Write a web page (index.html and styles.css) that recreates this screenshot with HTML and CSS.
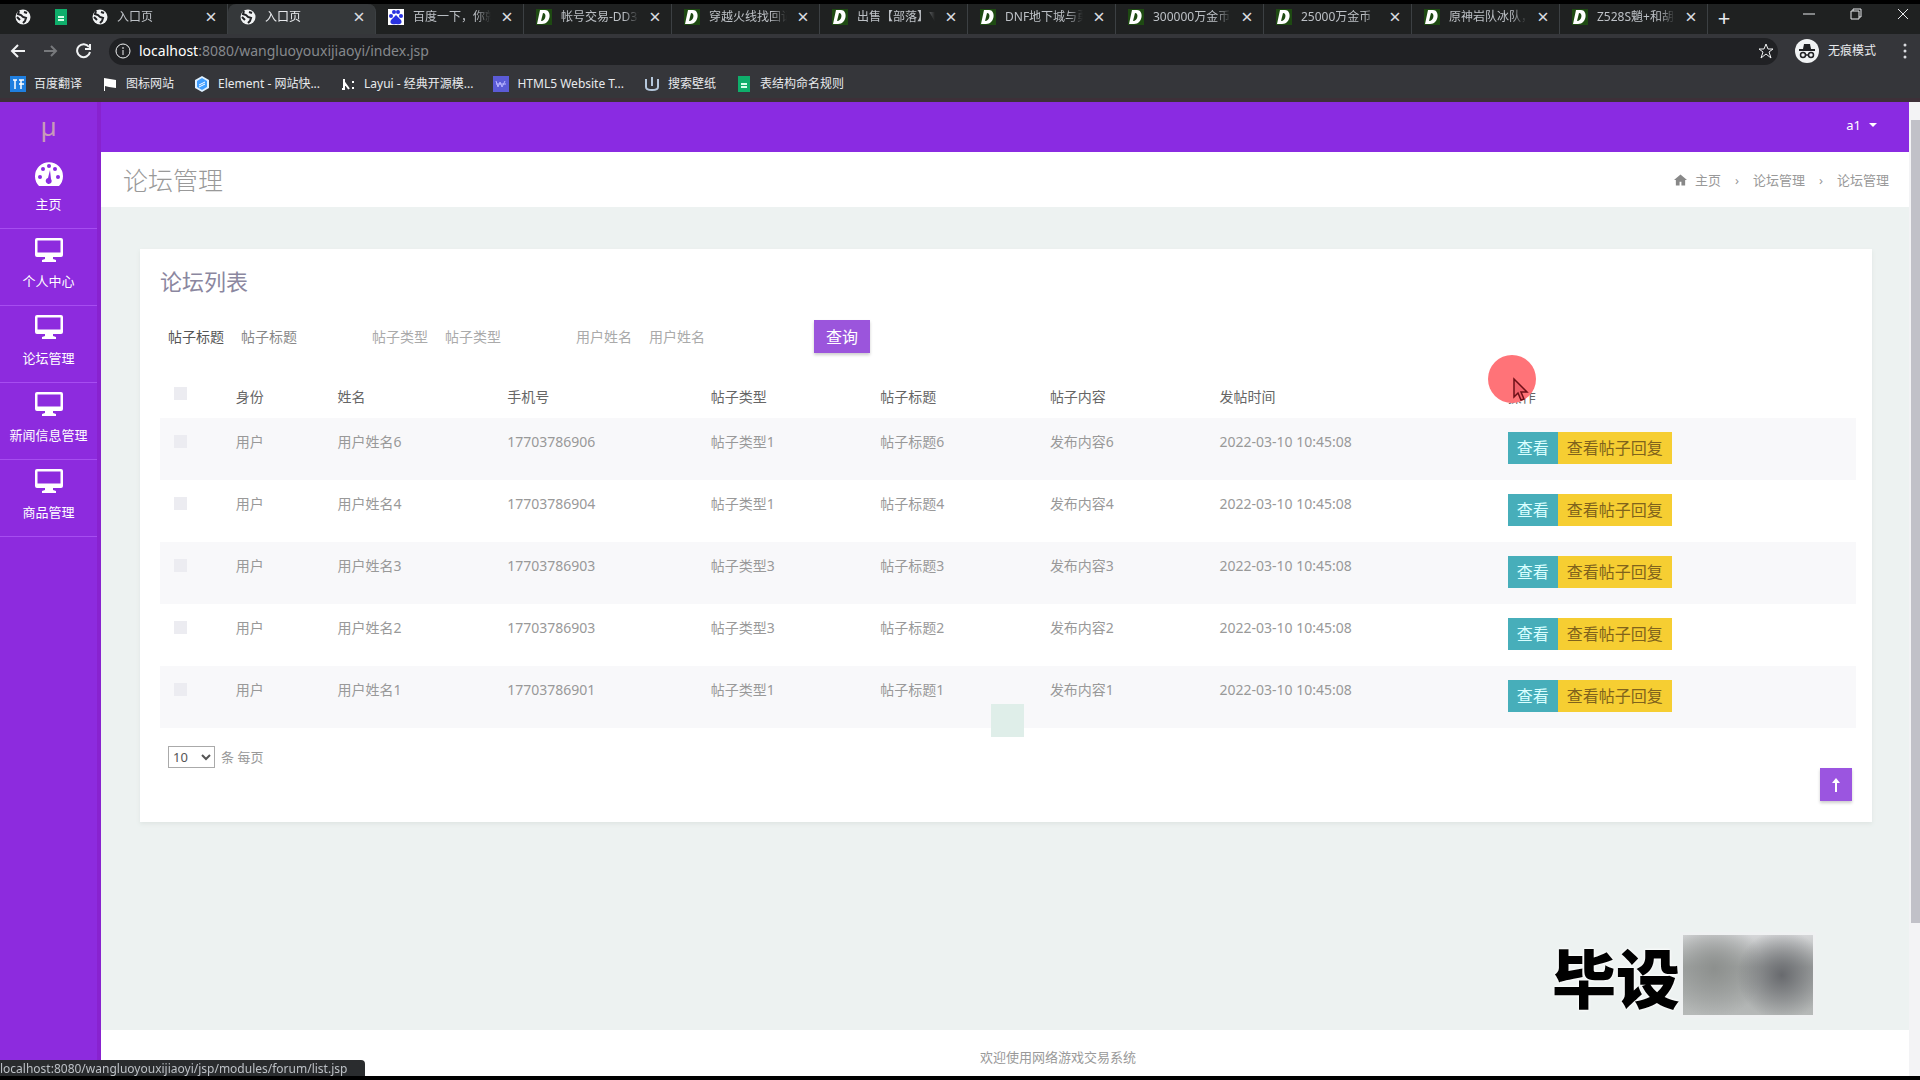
FILE: index.html
```html
<!DOCTYPE html>
<html lang="zh">
<head>
<meta charset="utf-8">
<title>入口页</title>
<link rel="stylesheet" href="styles.css">
</head>
<body>
<svg class="defs" aria-hidden="true">
  <symbol id="globe" viewBox="0 0 16 16"><circle cx="8" cy="8" r="7.500" fill="#f1f3f4"/><path d="M4 2l-1 3 3 1 2 2 3 1-1 3-2 2M9 3l3 1M2 8l3 3" fill="none" stroke="#202124" stroke-width="2"/></symbol>
  <symbol id="dd" viewBox="0 0 16 16"><path d="M0 0h16v16H0z" fill="#1e4a12"/><path fill-rule="evenodd" d="M4 1h5c7 0 6 14-3 14H1zM7 4L5 12c5 0 6-8 2-8z" fill="#fff"/></symbol>
  <symbol id="sheet" viewBox="0 0 16 16"><path d="M2 0h12v16H2z" fill="#0fae6b"/><path d="M5 8h6M5 11h6" stroke="#d7ffe9" stroke-width="2"/></symbol>
  <symbol id="monitor" viewBox="0 0 28 28"><path fill-rule="evenodd" d="M2 2h24a2 2 0 0 1 2 2v15a2 2 0 0 1-2 2h-8v2l3 1v2H7v-2l3-1v-2H2a2 2 0 0 1-2-2V4a2 2 0 0 1 2-2zM2.500 4.500v12h23v-12z" fill="#fff"/></symbol>
</svg>

<div class="browser">
  <div class="tabs">
    <div class="pins"><svg><use href="#globe"/></svg><svg><use href="#sheet"/></svg></div>
    <div class="tab"><svg><use href="#globe"/></svg><span>入口页</span><button aria-label="关闭">×</button></div>
    <div class="tab active"><svg><use href="#globe"/></svg><span>入口页</span><button aria-label="关闭">×</button></div>
    <div class="tab"><svg viewBox="0 0 16 16"><path d="M0 0h16v16H0z" fill="#fff"/><g fill="#2932e1"><circle cx="3" cy="7" r="2"/><circle cx="6" cy="3" r="2"/><circle cx="10" cy="3" r="2"/><circle cx="13" cy="7" r="2"/><path d="M8 6l5 5c2 4-2 5-5 4-3 1-7 0-5-4z"/></g></svg><span>百度一下，你就知道</span><button aria-label="关闭">×</button></div>
    <div class="tab"><svg><use href="#dd"/></svg><span>帐号交易-DD373</span><button aria-label="关闭">×</button></div>
    <div class="tab"><svg><use href="#dd"/></svg><span>穿越火线找回记录</span><button aria-label="关闭">×</button></div>
    <div class="tab"><svg><use href="#dd"/></svg><span>出售【部落】▼</span><button aria-label="关闭">×</button></div>
    <div class="tab"><svg><use href="#dd"/></svg><span>DNF地下城与勇士</span><button aria-label="关闭">×</button></div>
    <div class="tab"><svg><use href="#dd"/></svg><span>300000万金币</span><button aria-label="关闭">×</button></div>
    <div class="tab"><svg><use href="#dd"/></svg><span>25000万金币</span><button aria-label="关闭">×</button></div>
    <div class="tab"><svg><use href="#dd"/></svg><span>原神岩队冰队，</span><button aria-label="关闭">×</button></div>
    <div class="tab"><svg><use href="#dd"/></svg><span>Z528S魈+和胡桃</span><button aria-label="关闭">×</button></div>
    <button class="newtab" aria-label="新标签页">+</button>
    <div class="winctl">
      <svg viewBox="0 0 12 12"><path d="M0 6h12"/></svg>
      <svg viewBox="0 0 12 12"><path d="M1 3h8v8H1zM3 3V1h8v8H9"/></svg>
      <svg viewBox="0 0 12 12"><path d="M1 1l10 10M11 1L1 11"/></svg>
    </div>
  </div>
  <div class="toolbar">
    <svg viewBox="0 0 16 16"><path d="M15 8H2M8 2L2 8l6 6"/></svg>
    <svg class="dim" viewBox="0 0 16 16"><path d="M1 8h12M8 3l5 5-5 5"/></svg>
    <svg viewBox="0 0 16 16"><path d="M13 4a6.500 6.500 0 1 0 1 5M14 1v5H9"/></svg>
    <div class="omni">
      <svg class="thin" viewBox="0 0 16 16"><circle cx="8" cy="8" r="7"/><path d="M8 7v5M8 4v2"/></svg>
      <span class="url"><b>localhost</b>:8080/wangluoyouxijiaoyi/index.jsp</span>
      <svg class="thin" viewBox="0 0 16 16"><path d="M8 1l2 5h5l-4 3 2 6-5-4-5 4 2-6-4-3h5z"/></svg>
    </div>
    <svg class="incog" viewBox="0 0 24 24"><circle cx="12" cy="12" r="12" fill="#f1f3f4" stroke="none"/><path d="M8 10l1-5h6l1 5z" fill="#202124" stroke="none"/><path d="M4 11h16" stroke="#202124"/><g stroke="#202124" stroke-width="1.500"><circle cx="8" cy="16" r="2.500"/><circle cx="16" cy="16" r="2.500"/><path d="M10 16h4"/></g></svg>
    <span class="mode">无痕模式</span>
    <svg class="kebab" viewBox="0 0 4 16"><g fill="#dadce0" stroke="none"><circle cx="2" cy="2" r="1.500"/><circle cx="2" cy="8" r="1.500"/><circle cx="2" cy="14" r="1.500"/></g></svg>
  </div>
  <nav class="marks">
    <a href="#"><svg viewBox="0 0 16 16"><path d="M0 0h16v16H0z" fill="#1f7fe0"/><path d="M3 4h4M5 4v9M9 4h5M11 4v9M9 8h5" stroke="#fff" stroke-width="1.500"/></svg>百度翻译</a>
    <a href="#"><svg viewBox="0 0 16 16"><path d="M2 2l6 1 6 1v8l-7-1-4-1v5H2z" fill="#fff"/></svg>图标网站</a>
    <a href="#"><svg viewBox="0 0 16 16"><path d="M8 0l7 4v8l-7 4-7-4V4z" fill="#dff0ff"/><path d="M8 2l5 3v6l-5 3-5-3V5z" fill="#409eff"/><path d="M5 9l6-3M5 11l6-3" stroke="#fff"/></svg>Element - 网站快...</a>
    <a href="#"><svg viewBox="0 0 16 16"><path d="M4 3v9M4 6l5 7M2 13h3M13 5v2M13 11v2" stroke="#fff" stroke-width="2"/></svg>Layui - 经典开源模...</a>
    <a href="#"><svg viewBox="0 0 16 16"><path d="M0 0h16v16H0z" fill="#5b5bd6"/><path d="M3 5l2 6 2-5 2 5 3-6M3 8h10" fill="none" stroke="#b9b6ff"/></svg>HTML5 Website T...</a>
    <a href="#"><svg viewBox="0 0 16 16"><path d="M2 3v8c0 4 12 4 12 0V3M8 1v9" fill="none" stroke="#b5c8dc" stroke-width="2"/></svg>搜索壁纸</a>
    <a href="#"><svg><use href="#sheet"/></svg>表结构命名规则</a>
  </nav>
</div>

<div class="app">
  <aside class="side">
    <div class="logo">µ</div>
    <a href="#"><svg viewBox="0 0 28 28"><path d="M4 27a14 14 0 1 1 20 0z" fill="#fff"/><g fill="#8a2be2"><circle cx="5" cy="18" r="2"/><circle cx="8" cy="10" r="2"/><circle cx="14" cy="7" r="2"/><circle cx="20" cy="10" r="2"/><circle cx="23" cy="18" r="2"/><path d="M15 11l1 9a3 3 0 1 1-3-1z"/></g></svg>主页</a>
    <a href="#"><svg><use href="#monitor"/></svg>个人中心</a>
    <a href="#"><svg><use href="#monitor"/></svg>论坛管理</a>
    <a href="#"><svg><use href="#monitor"/></svg>新闻信息管理</a>
    <a href="#"><svg><use href="#monitor"/></svg>商品管理</a>
  </aside>
  <div class="main">
    <header class="top"><button>a1 <i></i></button></header>
    <div class="titlebar">
      <h1>论坛管理</h1>
      <nav class="crumbs">
        <svg viewBox="0 0 14 12"><path d="M7 0l7 6h-2v6H8V8H6v4H2V6H0z" fill="#888"/></svg>
        <a href="#">主页</a><span>›</span><a href="#">论坛管理</a><span>›</span><a href="#">论坛管理</a>
      </nav>
    </div>
    <main class="content">
      <section class="card">
        <h2>论坛列表</h2>
        <form class="search">
          <label for="t">帖子标题</label><input id="t" placeholder="帖子标题">
          <label class="soft" for="k">帖子类型</label><input id="k" class="soft" placeholder="帖子类型">
          <label class="soft" for="n">用户姓名</label><input id="n" class="soft" placeholder="用户姓名">
          <button type="button">查询</button>
        </form>
        <table>
          <colgroup><col class="w4"><col class="w6"><col class="w10"><col class="w12"><col class="w10"><col class="w10"><col class="w10"><col class="w17"><col class="w21"></colgroup>
          <thead><tr><th><input type="checkbox" aria-label="全选"></th><th>身份</th><th>姓名</th><th>手机号</th><th>帖子类型</th><th>帖子标题</th><th>帖子内容</th><th>发帖时间</th><th>操作</th></tr></thead>
          <tbody>
            <tr><td><input type="checkbox" aria-label="选择"></td><td>用户</td><td>用户姓名6</td><td>17703786906</td><td>帖子类型1</td><td>帖子标题6</td><td>发布内容6</td><td>2022-03-10 10:45:08</td><td><div class="ops"><button class="view">查看</button><button class="reply">查看帖子回复</button></div></td></tr>
            <tr><td><input type="checkbox" aria-label="选择"></td><td>用户</td><td>用户姓名4</td><td>17703786904</td><td>帖子类型1</td><td>帖子标题4</td><td>发布内容4</td><td>2022-03-10 10:45:08</td><td><div class="ops"><button class="view">查看</button><button class="reply">查看帖子回复</button></div></td></tr>
            <tr><td><input type="checkbox" aria-label="选择"></td><td>用户</td><td>用户姓名3</td><td>17703786903</td><td>帖子类型3</td><td>帖子标题3</td><td>发布内容3</td><td>2022-03-10 10:45:08</td><td><div class="ops"><button class="view">查看</button><button class="reply">查看帖子回复</button></div></td></tr>
            <tr><td><input type="checkbox" aria-label="选择"></td><td>用户</td><td>用户姓名2</td><td>17703786903</td><td>帖子类型3</td><td>帖子标题2</td><td>发布内容2</td><td>2022-03-10 10:45:08</td><td><div class="ops"><button class="view">查看</button><button class="reply">查看帖子回复</button></div></td></tr>
            <tr><td><input type="checkbox" aria-label="选择"></td><td>用户</td><td>用户姓名1</td><td>17703786901</td><td>帖子类型1</td><td>帖子标题1</td><td>发布内容1</td><td>2022-03-10 10:45:08</td><td><div class="ops"><button class="view">查看</button><button class="reply">查看帖子回复</button></div></td></tr>
          </tbody>
        </table>
        <div class="pager"><select id="size" aria-label="条数"><option>10</option></select><label for="size">条 每页</label></div>
      </section>
    </main>
    <footer>欢迎使用网络游戏交易系统</footer>
  </div>
  <div class="scroll"><i></i></div>
</div>

<button class="totop" aria-label="返回顶部"><svg viewBox="0 0 8 14"><path d="M0 5l4-5 4 5H5v9H3V5z" fill="#fff"/></svg></button>
<div class="spot"></div>
<div class="pointer"><svg viewBox="0 0 50 54"><circle cx="24" cy="24" r="24" fill="#ff7378"/><path d="M26 24v18l4-4 3 7 3-1-3-7h6z" fill="#f0606a" stroke="#6d1018" stroke-width="1.500"/></svg></div>
<div class="mark">毕设<i></i></div>
<div class="status">localhost:8080/wangluoyouxijiaoyi/jsp/modules/forum/list.jsp</div>
</body>
</html>
```
FILE: styles.css
```css
* { box-sizing: border-box; }
body { margin: 0; height: 100vh; display: flex; flex-direction: column; overflow: hidden; background: #000; border-bottom: 4px solid #000; font: 14px/20px "Noto Sans", "Noto Sans CJK SC", sans-serif; color: #777; }
button, input, select { font: inherit; }
button { border: 0; padding: 0; background: none; color: inherit; }
a { color: inherit; text-decoration: none; }
svg { flex: none; display: block; }
.defs { position: absolute; width: 0; height: 0; }

.browser { flex: none; background: #35363a; border-top: 4px solid #000; border-bottom: 4px solid #3d3038; color: #e8eaed; font-size: 13px; }
.tabs { height: 30px; display: flex; align-items: center; background: #1f2121; font-size: 12px; }
.pins { flex: none; width: 80px; padding: 0 0 4px 15px; display: flex; gap: 22px; }
.pins svg, .tab svg { width: 16px; height: 16px; }
.tab { flex: 0 1 148px; min-width: 0; height: 30px; padding: 0 9px 4px 12px; display: flex; align-items: center; gap: 9px; border-right: 1px solid #3c4043; color: #bdc1c6; }
.tab span { flex: 1; min-width: 0; overflow: hidden; white-space: nowrap; mask-image: linear-gradient(to right, #000 80%, transparent); }
.tab button { width: 14px; font-size: 20px; color: #dadce0; }
.tab.active { background: #35383a; color: #e8eaed; border-radius: 8px 8px 0 0; }
.newtab { width: 32px; font-size: 22px; padding-bottom: 4px; }
.winctl { margin-left: auto; padding: 0 11px 10px 0; display: flex; gap: 35px; }
.winctl svg { width: 12px; height: 12px; fill: none; stroke: #e8eaed; }
.toolbar { height: 34px; padding: 0 13px 0 10px; display: flex; align-items: center; gap: 17px; }
.toolbar svg { width: 16px; height: 16px; fill: none; stroke: #f1f3f4; stroke-width: 2; }
.toolbar .dim { stroke: #77797c; }
.toolbar .thin { stroke-width: 1; }
.toolbar .incog { width: 24px; height: 24px; }
.toolbar .kebab { width: 4px; margin-left: 10px; }
.omni { flex: 1; height: 27px; padding: 0 4px 0 6px; border-radius: 14px; background: #202124; display: flex; align-items: center; gap: 8px; font-size: 14px; }
.url { flex: 1; color: #85888c; }
.url b { font-weight: 400; color: #fff; }
.mode { margin-left: -8px; font-size: 12px; }
.marks { height: 30px; padding: 2px 0 0 10px; display: flex; align-items: center; gap: 20px; font-size: 12px; white-space: nowrap; }
.marks a { display: flex; align-items: center; gap: 8px; }
.marks svg { width: 16px; height: 16px; }

.app { flex: 1; min-height: 0; display: flex; background: #8a2be2; }
.side { width: 101px; border-right: 4px solid #8822cf; background: #8d2bde; color: #fff; font-size: 13px; }
.logo { height: 50px; padding: 12px 0 0; text-align: center; font: 400 26px/24px "Noto Sans", sans-serif; color: #c89ab8; }
.side a { height: 77px; padding: 7px 0 0; display: flex; flex-direction: column; align-items: center; gap: 7px; border-bottom: 1px solid #a64df0; white-space: nowrap; }
.side a svg { width: 28px; height: 28px; }
.main { flex: 1; min-width: 0; display: flex; flex-direction: column; background: #edf2f1; }
.top { height: 50px; padding: 0 32px 4px 0; display: flex; justify-content: flex-end; align-items: center; background: #8a2be2; color: #fff; font-size: 13px; }
.top button { display: flex; align-items: center; gap: 8px; }
.top i { border: 4px solid transparent; border-top-color: #fff; border-bottom: 0; }
.titlebar { height: 55px; padding: 0 20px 0 22px; display: flex; align-items: center; justify-content: space-between; background: #fff; }
h1 { margin: 0; font-size: 25px; line-height: 32px; font-weight: 300; color: #999; }
.crumbs { display: flex; align-items: center; gap: 14px; font-size: 13px; color: #999; }
.crumbs svg { width: 13px; height: 12px; margin-right: -6px; }
.content { flex: 1; padding: 42px 37px 0 39px; }
.card { height: 573px; padding: 18px 16px 0 20px; background: #fff; box-shadow: 0 2px 4px #dfe5e3; }
h2 { margin: 0; font-size: 22px; line-height: 28px; font-weight: 400; color: #8b87a0; }
.search { margin-top: 25px; padding-left: 8px; height: 33px; display: flex; align-items: center; color: #555; }
.search label { width: 61px; white-space: nowrap; }
.search input { width: 143px; height: 32px; padding: 0 12px; border: 0; background: none; color: #777; }
.search input::placeholder { color: #888; }
.search .soft, .search .soft::placeholder { color: #aaa; }
.search button { width: 56px; height: 33px; margin-left: 34px; background: #9b55dc; color: #fff; font-size: 16px; box-shadow: 0 2px 3px #ccc; }
table { width: 100%; margin-top: 17px; table-layout: fixed; border-collapse: collapse; }
.w4 { width: 4%; } .w6 { width: 6%; } .w10 { width: 10%; } .w12 { width: 12%; } .w17 { width: 17%; } .w21 { width: 21%; }
th { height: 48px; padding: 6px 8px 0; text-align: left; font-weight: 400; color: #666; }
td { height: 62px; padding: 14px 8px; vertical-align: top; white-space: nowrap; color: #999; }
tbody tr:nth-child(odd) { background: #f8f8fa; }
td input, th input { appearance: none; display: block; width: 13px; height: 13px; margin: 3px 0 0 6px; background: #ececf1; }
th input { margin-top: -8px; }
.ops { display: flex; }
.ops button { height: 32px; font-size: 16px; }
.view { width: 50px; background: #47aeba; color: #d9ffff; }
.reply { width: 114px; background: #f6ce32; color: #80631c; }
.pager { margin-top: 18px; padding-left: 8px; display: flex; align-items: center; gap: 6px; font-size: 13px; color: #999; }
.pager select { width: 47px; height: 22px; padding: 0; border: 1px solid #aaa; background: #fff; color: #555; }
footer { height: 46px; padding: 17px 0 0 106px; background: #fff; text-align: center; font-size: 13px; color: #999; }
.scroll { width: 11px; padding: 18px 0 0 2px; background: #f3f3f5; }
.scroll i { display: block; height: 84%; background: #c1c1c8; }

.totop { position: fixed; right: 68px; bottom: 279px; width: 32px; height: 33px; display: flex; align-items: center; justify-content: center; background: #9b55e0; box-shadow: 0 2px 3px #ccc; }
.totop svg { width: 8px; height: 14px; }
.spot { position: fixed; left: 991px; top: 704px; width: 33px; height: 33px; background: #dfeee9; }
.pointer { position: fixed; left: 1488px; top: 355px; width: 50px; }
.mark { position: fixed; right: 104px; bottom: 62px; display: flex; align-items: center; height: 86px; font: 900 64px/80px "Noto Sans CJK SC", sans-serif; color: #000; text-shadow: 0 0 3px #fff, 0 0 3px #fff; }
.mark i { width: 136px; height: 86px; border: 3px solid #eff1f2; background: radial-gradient(circle at 76% 50%, #686a6e, transparent 42%), radial-gradient(circle at 24% 42%, #8d908e, transparent 45%), linear-gradient(#d5d6d8, #a3a6a5 40%, #b6b9b8); }
.status { position: fixed; left: 0; bottom: 4px; width: 365px; height: 16px; border-radius: 0 4px 0 0; background: #2a2c2e; color: #bdc1c6; font-size: 12px; line-height: 18px; white-space: nowrap; overflow: hidden; }
```
